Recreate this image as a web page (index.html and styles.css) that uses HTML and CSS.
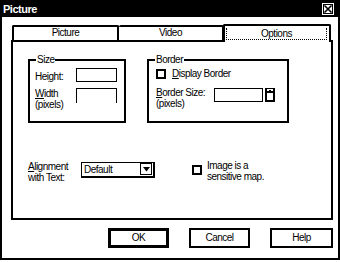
FILE: index.html
```html
<!DOCTYPE html>
<html>
<head>
<meta charset="utf-8">
<link rel="stylesheet" href="styles.css">
</head>
<body>
<div class="window">
  <div class="titlebar">
    <span class="title">Picture</span>
    <span class="close"><svg width="12" height="12" viewBox="0 0 12 12"><rect x="0" y="0" width="12" height="12" fill="#fff"/><rect x="1.5" y="1.5" width="9" height="9" fill="none" stroke="#000" stroke-width="1"/><path d="M2.5 2.5 L9.5 9.5 M9.5 2.5 L2.5 9.5" stroke="#000" stroke-width="1.6"/></svg></span>
  </div>
  <div class="sheet">
    <div class="tabs">
      <div class="tab first">Picture</div>
      <div class="tab">Video</div>
      <div class="tab active"><span class="focus">Options</span></div>
    </div>
    <div class="panel">
      <div class="groups">
        <fieldset class="group size">
          <legend>Size</legend>
          <div class="row"><span class="lbl">Hei<u>g</u>ht:</span><span class="box"></span></div>
          <div class="row row2"><span class="lbl"><u>W</u>idth<br>(pixels)</span><span class="box open"></span></div>
        </fieldset>
        <fieldset class="group border">
          <legend>Border</legend>
          <div class="check"><span class="cb"></span><span><u>D</u>isplay Border</span></div>
          <div class="row bsize"><span class="lbl"><u>B</u>order Size:<br>(pixels)</span><span class="box wide"></span><span class="spin"><span class="up"></span><span class="down"></span></span></div>
        </fieldset>
      </div>
      <div class="lower">
        <span class="lbl align"><u>A</u>lignment<br>with Text:</span>
        <span class="select"><span class="val">Default</span><span class="arrow"><svg width="7" height="5" viewBox="0 0 7 5"><path d="M0 0 H7 L3.5 4.5 Z" fill="#000"/></svg></span></span>
        <span class="cb map"></span>
        <span class="lbl maptext">Image is a<br>sensitive map.</span>
      </div>
    </div>
  </div>
  <div class="buttons">
    <span class="btn default">OK</span>
    <span class="btn">Cancel</span>
    <span class="btn help">Help</span>
  </div>
</div>
</body>
</html>
```
FILE: styles.css
```css
* { box-sizing: border-box; }
html, body { margin: 0; padding: 0; background: #fff; }
body {
  font-family: "Liberation Sans", Arial, sans-serif;
  font-size: 10px;
  letter-spacing: -0.5px;
  color: #000;
}
.window {
  width: 340px;
  height: 260px;
  border: 2px solid #000;
  border-top: 0;
  background: #fff;
}
.titlebar {
  height: 17px;
  margin: 0 -2px;
  background: #000;
  color: #fff;
  display: flex;
  align-items: center;
  justify-content: space-between;
  padding: 0 6px 0 3px;
}
.title { font-weight: bold; font-size: 11px; line-height: 12px; letter-spacing: -0.5px; }
.close { display: flex; width: 12px; height: 12px; }
.sheet { margin: 6px 5px 0 9px; }
.tabs { display: flex; height: 17px; align-items: flex-end; padding-left: 1px; }
.tab {
  height: 15px;
  border-top: 2px solid #000;
  border-right: 2px solid #000;
  border-radius: 2px 2px 0 0;
  text-align: center;
  line-height: 12px;
  width: 105px;
}
.tab.first { border-left: 2px solid #000; width: 107px; }
.tab.active {
  width: 108px;
  height: 18px;
  margin-left: -1px;
  margin-bottom: -2px;
  border-left: 2px solid #000;
  position: relative;
  z-index: 1;
  background: #fff;
  padding: 2px 2px 0 1px;
}
.focus {
  display: block;
  border: 1px dotted #000;
  border-top: 0;
  height: 12px;
  line-height: 11px;
}
.panel {
  height: 180px;
  border: 2px solid #000;
  padding: 13px 0 0 15px;
}
.groups { display: flex; gap: 21px; }
.group {
  margin: 0;
  border: 2px solid #000;
  padding: 0 0 0 5px;
  height: 68px;
}
.group legend { padding: 0 1px; margin-left: 1px; line-height: 10px; }
.size { width: 98px; }
.border { width: 142px; }
.row { display: flex; align-items: flex-start; }
.lbl { line-height: 11px; }
.size .row { margin-top: 3px; }
.size .row .lbl { width: 41px; padding-top: 3px; }
.size .row2 { margin-top: 6px; }
.size .row2 .lbl { padding-top: 0; }
.box { display: block; width: 41px; height: 14px; border: 1px solid #000; }
.box.open { border-bottom: 0; height: 15px; }
.check { display: flex; align-items: center; gap: 6px; margin: 3px 0 0 2px; }
.cb { display: block; width: 10px; height: 10px; border: 2px solid #000; }
.bsize { margin: 8px 0 0 2px; }
.bsize .lbl { width: 58px; }
.box.wide { width: 49px; margin-top: 1px; height: 14px; }
.spin {
  display: flex;
  flex-direction: column;
  width: 10px;
  height: 14px;
  margin: 1px 0 0 2px;
  border: 2px solid #000;
  border-top-width: 1px;
}
.spin .up { height: 4px; border-bottom: 2px solid #000; position: relative; }
.spin .up::after { content: ""; position: absolute; left: 2px; top: 1px; width: 2px; height: 1px; background: #000; }
.spin .down { flex: 1; }
.lower { display: flex; align-items: flex-start; margin-top: 39px; }
.align { width: 53px; margin-top: -1px; }
.select {
  display: flex;
  justify-content: space-between;
  width: 74px;
  height: 16px;
  border: 2px solid #000;
  border-left-width: 1px;
  border-top-width: 1px;
}
.val { padding: 1px 0 0 2px; line-height: 11px; }
.arrow {
  width: 12px;
  display: flex;
  justify-content: center;
  align-items: flex-start;
  padding-top: 3px;
  border: 1px solid #000;
  margin: 0 1px 1px 0;
}
.cb.map { margin: 3px 0 0 37px; }
.maptext { margin-left: 5px; margin-top: -2px; }
.buttons {
  display: flex;
  margin: 8px 0 0 106px;
  gap: 20px;
}
.btn {
  width: 61px;
  height: 20px;
  border: 2px solid #000;
  text-align: center;
  line-height: 16px;
}
.btn.default { border-width: 3px; line-height: 14px; }
.btn.help { width: 63px; }
```
